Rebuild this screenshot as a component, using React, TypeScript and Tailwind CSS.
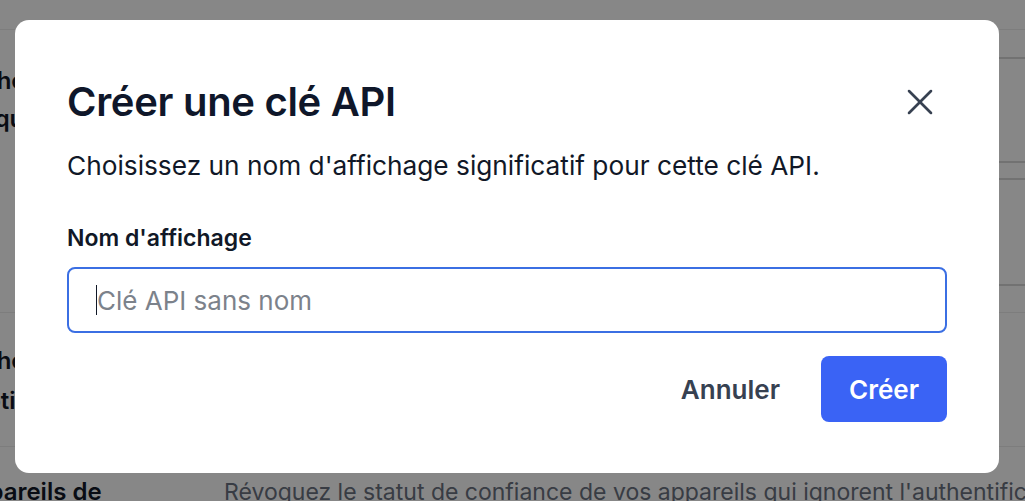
import React from "react";

const font = { fontFamily: "Inter, 'Noto Sans', sans-serif" };

function Background() {
  return (
    <div className="w-[1025px] h-[501px] overflow-hidden bg-white text-[#111827]">
      <div className="h-[30px] border-b border-[#ececec]" />
      <div className="flex h-[283px] border-b border-[#ececec]">
        <div className="w-[224px] shrink-0 -ml-[44px] pt-[32px] text-[24px] font-semibold leading-[38px]">
          <div>Authentification</div>
          <div>Unique</div>
        </div>
        <div className="flex-1 pl-[44px] pt-[27px] flex flex-col gap-[15px]">
          <div className="h-[106px] border-y-2 border-[#d8d8d8]" />
          <div className="h-[108px] border-y-2 border-[#d8d8d8]" />
        </div>
      </div>
      <div className="flex h-[134px] border-b border-[#ececec]">
        <div className="w-[224px] shrink-0 -ml-[44px] pt-[28px] text-[24px] font-semibold leading-[40px]">
          <div>Authentification</div>
          <div className="ml-[12px]">Notifications</div>
        </div>
      </div>
      <div className="flex">
        <div className="w-[268px] shrink-0 -ml-[44px] pr-[90px] pt-[26px] text-[24px] font-semibold leading-[38px]">
          Appareils de confiance
        </div>
        <div className="pt-[26px] text-[23px] leading-[38px] text-[#6b7280] whitespace-nowrap">
          Révoquez le statut de confiance de vos appareils qui ignorent l'authentification à deux facteurs
        </div>
      </div>
    </div>
  );
}

export default function App() {
  return (
    <div className="relative w-[1025px] h-[501px] overflow-hidden" style={font}>
      <Background />
      <div className="absolute inset-0 bg-black/[0.47] pt-[20px] pl-[15px]">
        <div className="w-[984px] h-[453px] bg-white rounded-[14px] px-[52px] pt-[58px]">
          <div className="flex items-center justify-between h-[48px]">
            <h2 className="text-[40px] leading-[48px] font-semibold text-[#0f172a] tracking-[-0.3px]">
              Créer une clé API
            </h2>
            <button className="w-[44px] h-[44px] flex items-center justify-center text-[#374151] mr-[5px]">
              <svg width="44" height="44" viewBox="0 0 24 24" fill="none" stroke="currentColor" strokeWidth="1.4" strokeLinecap="round" strokeLinejoin="round">
                <path d="M18 6 6 18" />
                <path d="m6 6 12 12" />
              </svg>
            </button>
          </div>
          <p className="mt-[22px] text-[26.25px] leading-[36px] text-[#111827]">
            Choisissez un nom d'affichage significatif pour cette clé API.
          </p>
          <label className="block mt-[38px] text-[23px] leading-[32px] font-semibold text-[#111827]">
            Nom d'affichage
          </label>
          <div className="mt-[13px] h-[66px] rounded-[8px] border-2 border-[#3b6fe3] flex items-center pl-[27px]">
            <span className="w-px h-[30px] bg-[#111827]" />
            <span className="text-[26px] text-[#7c828b]">Clé API sans nom</span>
          </div>
          <div className="mt-[23px] flex justify-end items-center gap-[12px]">
            <button className="h-[66px] px-[29px] text-[26px] font-semibold text-[#374151]">Annuler</button>
            <button className="h-[66px] px-[28px] rounded-[8px] bg-[#3a63f5] text-[26px] font-semibold text-white">Créer</button>
          </div>
        </div>
      </div>
    </div>
  );
}
